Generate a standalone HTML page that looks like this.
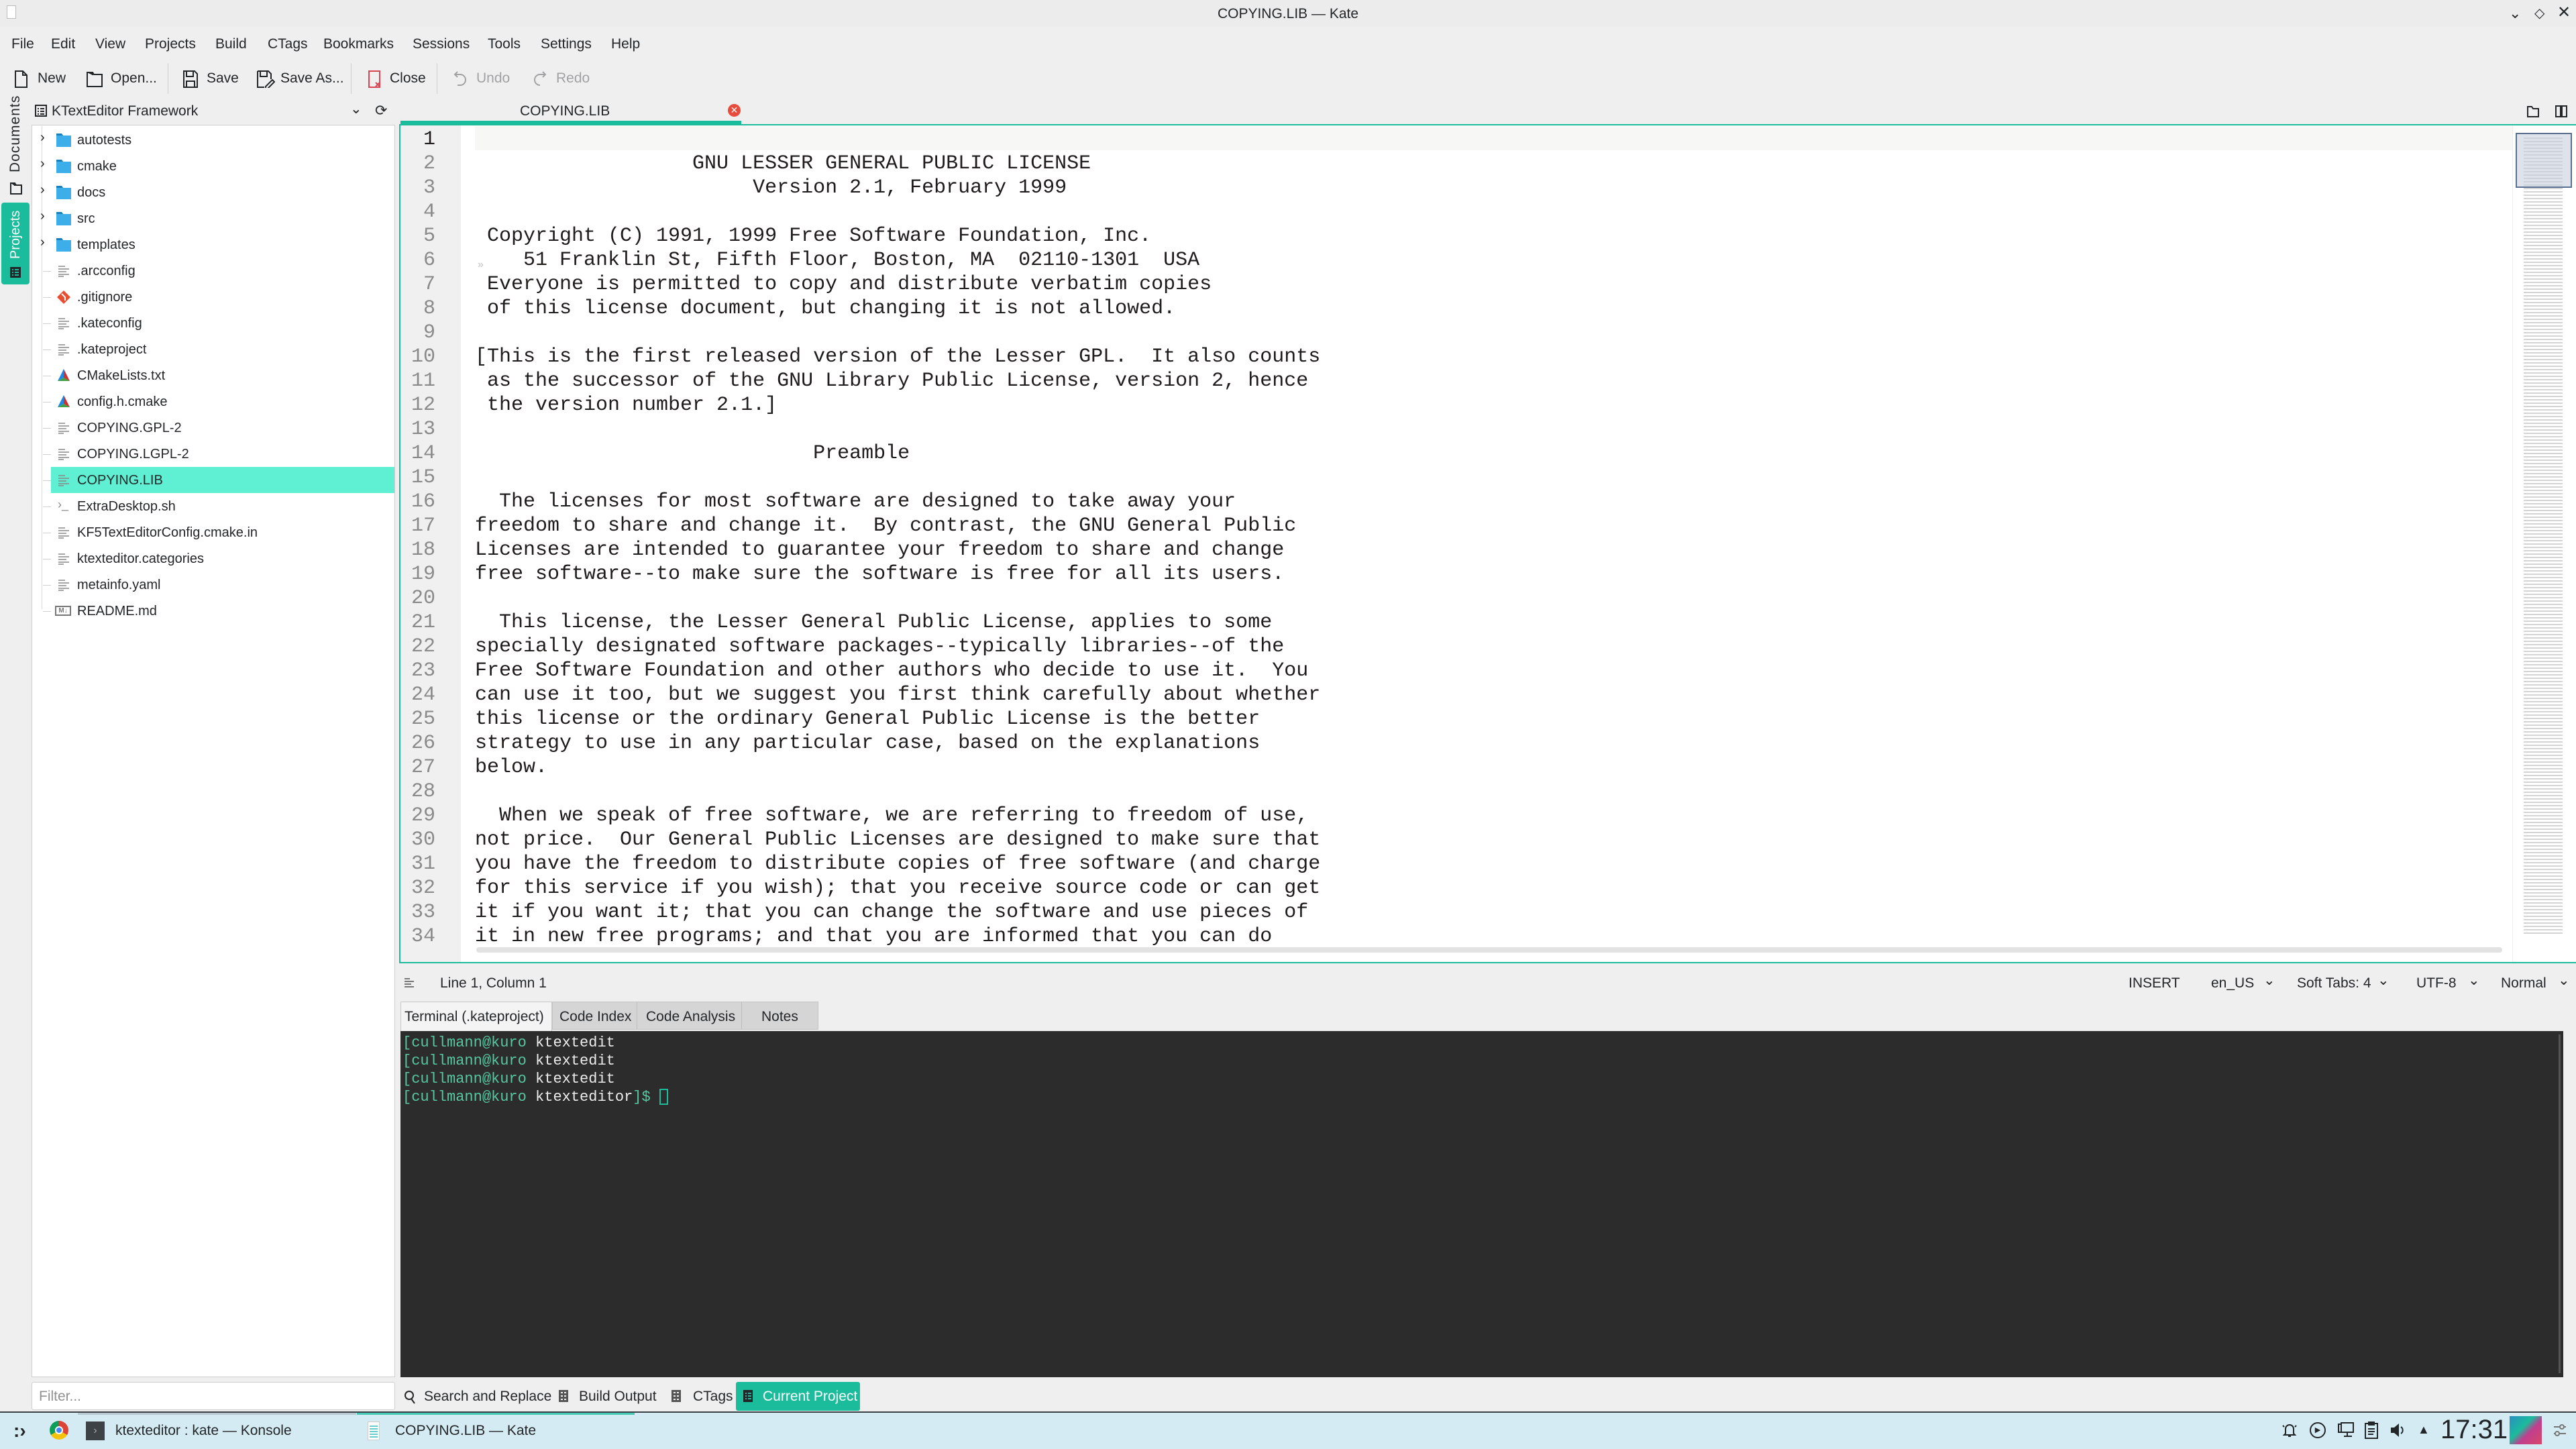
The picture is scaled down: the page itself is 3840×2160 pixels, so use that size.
<!DOCTYPE html>
<html><head><meta charset="utf-8">
<style>
*{margin:0;padding:0;box-sizing:border-box}
body{width:3840px;height:2160px;background:#efefef;position:relative;overflow:hidden;font-family:"Liberation Sans",sans-serif;color:#232629;font-size:21px}
.a{position:absolute;white-space:pre}
.mono{font-family:"Liberation Mono",monospace}
.ui{font-size:21px;line-height:26px}
svg{position:absolute}
</style></head><body>

<!-- title bar -->
<div class="a" style="left:0;top:0;width:3840px;height:40px;background:#ececec"></div>
<div class="a" style="left:10px;top:8px;width:14px;height:20px;border:1px solid #bbb;background:#fff"></div>
<div class="a ui" style="left:0;width:3840px;text-align:center;top:8px">COPYING.LIB — Kate</div>
<div class="a ui" style="left:3740px;top:7px;font-size:22px">⌄</div>
<div class="a ui" style="left:3778px;top:7px;font-size:20px">◇</div>
<div class="a ui" style="left:3812px;top:6px;font-size:24px">✕</div>

<!-- menu -->
<div class="a ui" style="top:53px;left:17px">File</div>
<div class="a ui" style="top:53px;left:76px">Edit</div>
<div class="a ui" style="top:53px;left:142px">View</div>
<div class="a ui" style="top:53px;left:216px">Projects</div>
<div class="a ui" style="top:53px;left:321px">Build</div>
<div class="a ui" style="top:53px;left:399px">CTags</div>
<div class="a ui" style="top:53px;left:482px">Bookmarks</div>
<div class="a ui" style="top:53px;left:615px">Sessions</div>
<div class="a ui" style="top:53px;left:727px">Tools</div>
<div class="a ui" style="top:53px;left:806px">Settings</div>
<div class="a ui" style="top:53px;left:911px">Help</div>

<!-- toolbar -->
<svg style="left:20px;top:105px" width="24" height="26" viewBox="0 0 24 26" fill="none" stroke="#232629" stroke-width="2"><path d="M3 1h11l6 6v18H3z"/><path d="M14 1v6h6"/></svg>
<div class="a ui" style="top:104px;left:56px">New</div>
<svg style="left:128px;top:105px" width="26" height="26" viewBox="0 0 26 26" fill="none" stroke="#232629" stroke-width="2"><path d="M2 3h8l2 3h12v18H2z"/><path d="M2 3h8v4" fill="#232629"/></svg>
<div class="a ui" style="top:104px;left:165px">Open...</div>
<div class="a" style="left:250px;top:94px;width:1px;height:46px;background:#d0d0d0"></div>
<svg style="left:272px;top:105px" width="24" height="26" viewBox="0 0 24 26" fill="none" stroke="#232629" stroke-width="2"><path d="M2 1h16l4 4v20H2z"/><path d="M6 1v8h10V1M6 25v-9h12v9"/></svg>
<div class="a ui" style="top:104px;left:308px">Save</div>
<svg style="left:382px;top:105px" width="28" height="26" viewBox="0 0 28 26" fill="none" stroke="#232629" stroke-width="2"><path d="M2 1h16l4 4v8M2 1v24h10"/><path d="M6 1v8h10V1"/><path d="M14 24l10-10 3 3-10 10h-3z"/></svg>
<div class="a ui" style="top:104px;left:418px">Save As...</div>
<div class="a" style="left:523px;top:94px;width:1px;height:46px;background:#d0d0d0"></div>
<svg style="left:548px;top:105px" width="22" height="28" viewBox="0 0 22 28" fill="none" stroke="#da4453" stroke-width="2"><path d="M2 1h16v24H2z"/><path d="M12 18l6 6M18 18l-6 6"/></svg>
<div class="a ui" style="top:104px;left:581px">Close</div>
<div class="a" style="left:651px;top:94px;width:1px;height:46px;background:#d0d0d0"></div>
<svg style="left:676px;top:105px" width="22" height="26" viewBox="0 0 22 26" fill="none" stroke="#a0a2a4" stroke-width="2"><path d="M6 2L2 6l4 4M2 6h8a8 8 0 0 1 0 16H6"/></svg>
<div class="a ui" style="top:104px;left:710px;color:#a0a2a4">Undo</div>
<svg style="left:793px;top:105px" width="22" height="26" viewBox="0 0 22 26" fill="none" stroke="#a0a2a4" stroke-width="2"><path d="M16 2l4 4-4 4M20 6h-8a8 8 0 0 0 0 16"/></svg>
<div class="a ui" style="top:104px;left:829px;color:#a0a2a4">Redo</div>

<!-- left vertical strip -->
<div class="a ui" style="left:10px;top:257px;transform:rotate(-90deg);transform-origin:0 0;font-size:21px;letter-spacing:1px">Documents</div>
<svg style="left:14px;top:271px" width="20" height="20" viewBox="0 0 20 20" fill="none" stroke="#232629" stroke-width="2"><path d="M2 2h6l2 3h8v13H2z"/><path d="M2 2h6v4" fill="#232629"/></svg>
<div class="a" style="left:2px;top:302px;width:42px;height:122px;background:#1abc9c;border-radius:4px"></div>
<div class="a" style="left:11px;top:386px;transform:rotate(-90deg);transform-origin:0 0;color:#fff;font-size:20px;line-height:24px">Projects</div>
<svg style="left:14px;top:397px" width="18" height="18" viewBox="0 0 18 18"><rect x="1" y="1" width="16" height="16" fill="#232629"/><path d="M4 5h2M8 5h6M4 9h2M8 9h6M4 13h2M8 13h6" stroke="#1abc9c" stroke-width="2"/></svg>

<!-- project header -->
<svg style="left:52px;top:156px" width="18" height="18" viewBox="0 0 18 18"><rect x="1" y="1" width="16" height="16" fill="none" stroke="#232629" stroke-width="2"/><path d="M4 6h2M8 6h6M4 10h2M8 10h6M4 14h2M8 14h6" stroke="#232629" stroke-width="2"/></svg>
<div class="a ui" style="left:77px;top:153px">KTextEditor Framework</div>
<div class="a ui" style="left:522px;top:150px">⌄</div>
<div class="a ui" style="left:559px;top:152px;font-size:22px">⟳</div>

<!-- tree -->
<div class="a" style="left:47px;top:186px;width:542px;height:1867px;background:#fff;border:1px solid #cfcfcf"></div>
<div class="a" style="left:62px;top:188px;width:1px;height:720px;background:#d8d8d8"></div>
<div class="a" style="left:76px;top:696px;width:512px;height:39px;background:#5ff0d3"></div>

<div id="tree"></div>

<!-- filter -->
<div class="a" style="left:47px;top:2060px;width:542px;height:42px;background:#fff;border:1px solid #cfcfcf;border-radius:3px"></div>
<div class="a ui" style="left:58px;top:2069px;color:#909090">Filter...</div>

<!-- editor tab row -->
<div class="a ui" style="left:775px;top:153px">COPYING.LIB</div>
<div class="a" style="left:1085px;top:155px;width:19px;height:19px;border-radius:50%;background:#e74c3c;color:#fff;font-size:14px;line-height:19px;text-align:center">✕</div>
<div class="a" style="left:597px;top:180px;width:508px;height:5px;background:#1abc9c"></div>
<svg style="left:3766px;top:156px" width="20" height="20" viewBox="0 0 20 20" fill="none" stroke="#232629" stroke-width="2"><path d="M2 3h6l2 3h8v12H2z"/></svg>
<svg style="left:3808px;top:156px" width="20" height="20" viewBox="0 0 20 20" fill="none" stroke="#232629" stroke-width="2"><rect x="2" y="2" width="7" height="16"/><rect x="11" y="2" width="7" height="16"/></svg>

<!-- editor -->
<div class="a" style="left:595px;top:185px;width:3245px;height:1251px;background:#fff;border:2px solid #1abc9c;border-right:none"></div>
<div class="a" style="left:597px;top:187px;width:90px;height:1247px;background:#f0f0f0"></div>
<div class="a" style="left:708px;top:188px;width:3037px;height:36px;background:#f7f7f5"></div>
<div class="a" style="left:710px;top:1412px;width:3020px;height:8px;background:#e2e2e2;border-radius:4px"></div>
<div class="a" style="left:3745px;top:187px;width:1px;height:1247px;background:#eee"></div>
<div class="a" style="left:3762px;top:205px;width:58px;height:1190px;background:repeating-linear-gradient(#b0b0b0 0 2px,#fff 2px 5px);opacity:.55"></div>
<div class="a" style="left:3750px;top:198px;width:84px;height:82px;background:rgba(200,208,222,.6);border:2px solid #5a7090"></div>

<div id="gut" class="a mono" style="left:597px;top:190px;width:52px;text-align:right;font-size:30px;line-height:36px;color:#8a8a8a"></div>
<div id="ed" class="a mono" style="left:708px;top:190px;font-size:30px;line-height:36px;color:#1f1c1b;height:1220px;overflow:hidden"></div>
<div class="a" style="left:712px;top:386px;color:#c0c0c0;font-size:16px">»</div>

<!-- status bar -->
<svg style="left:602px;top:1457px" width="16" height="18" viewBox="0 0 16 18" stroke="#777" stroke-width="2"><path d="M1 2h8M1 6h14M1 10h10M1 14h14"/></svg>
<div class="a ui" style="left:656px;top:1453px">Line 1, Column 1</div>
<div class="a ui" style="left:3173px;top:1453px">INSERT</div>
<div class="a ui" style="left:3296px;top:1453px">en_US</div>
<div class="a ui" style="left:3374px;top:1449px">⌄</div>
<div class="a ui" style="left:3424px;top:1453px">Soft Tabs: 4</div>
<div class="a ui" style="left:3544px;top:1449px">⌄</div>
<div class="a ui" style="left:3602px;top:1453px">UTF-8</div>
<div class="a ui" style="left:3679px;top:1449px">⌄</div>
<div class="a ui" style="left:3728px;top:1453px">Normal</div>
<div class="a ui" style="left:3813px;top:1449px">⌄</div>

<!-- bottom tabs -->
<div class="a" style="left:597px;top:1493px;width:226px;height:44px;background:#f4f4f4;border:1px solid #c8c8c8;border-bottom:none"></div>
<div class="a" style="left:823px;top:1493px;width:397px;height:42px;background:#d5d5d5;border:1px solid #c4c4c4"></div>
<div class="a" style="left:949px;top:1493px;width:1px;height:42px;background:#bdbdbd"></div>
<div class="a" style="left:1105px;top:1493px;width:1px;height:42px;background:#bdbdbd"></div>
<div class="a ui" style="left:603px;top:1503px">Terminal (.kateproject)</div>
<div class="a ui" style="left:834px;top:1503px">Code Index</div>
<div class="a ui" style="left:963px;top:1503px">Code Analysis</div>
<div class="a ui" style="left:1135px;top:1503px">Notes</div>

<!-- terminal -->
<div class="a" style="left:597px;top:1537px;width:3224px;height:516px;background:#2c2c2c"></div>
<div class="a" style="left:3814px;top:1542px;width:3px;height:505px;background:#555"></div>
<div class="a mono" style="left:600px;top:1541px;font-size:22px;line-height:27px;color:#ececec"><span style="color:#57c7a0">[cullmann@kuro</span> ktextedit
<span style="color:#57c7a0">[cullmann@kuro</span> ktextedit
<span style="color:#57c7a0">[cullmann@kuro</span> ktextedit
<span style="color:#57c7a0">[cullmann@kuro</span> ktexteditor<span style="color:#57c7a0">]$</span> <span style="display:inline-block;width:13px;height:24px;border:2px solid #1abc9c;vertical-align:middle"></span></div>

<!-- bottom toolview buttons -->
<svg style="left:601px;top:2072px" width="20" height="22" viewBox="0 0 20 22" fill="none" stroke="#232629" stroke-width="2"><circle cx="9" cy="8" r="6"/><path d="M12 13l5 7"/></svg>
<div class="a ui" style="left:632px;top:2069px">Search and Replace</div>
<svg style="left:832px;top:2071px" width="16" height="20" viewBox="0 0 16 20"><rect x="1" y="1" width="14" height="18" fill="#555"/><path d="M4 5h3M9 5h3M4 10h3M9 10h3M4 15h3M9 15h3" stroke="#eee" stroke-width="2"/></svg>
<div class="a ui" style="left:863px;top:2069px">Build Output</div>
<svg style="left:1000px;top:2071px" width="16" height="20" viewBox="0 0 16 20"><rect x="1" y="1" width="14" height="18" fill="#555"/><path d="M4 5h3M9 5h3M4 10h3M9 10h3M4 15h3M9 15h3" stroke="#eee" stroke-width="2"/></svg>
<div class="a ui" style="left:1033px;top:2069px">CTags</div>
<div class="a" style="left:1097px;top:2060px;width:185px;height:43px;background:#1abc9c;border-radius:3px"></div>
<svg style="left:1107px;top:2071px" width="16" height="20" viewBox="0 0 16 20"><rect x="1" y="1" width="14" height="18" fill="#232629"/><path d="M4 6h2M8 6h5M4 10h2M8 10h5M4 14h2M8 14h5" stroke="#1abc9c" stroke-width="2"/></svg>
<div class="a ui" style="left:1137px;top:2069px;color:#fff">Current Project</div>

<!-- taskbar -->
<div class="a" style="left:0;top:2104px;width:3840px;height:56px;background:#d5ebf3;border-top:2px solid #3a4045"></div>
<div class="a" style="left:116px;top:2106px;width:415px;height:3px;background:#b8c8d0"></div>
<div class="a" style="left:532px;top:2106px;width:414px;height:3px;background:#46c8b4"></div>
<div class="a" style="left:20px;top:2117px;font-size:28px;font-weight:bold;color:#232629">:›</div>
<div class="a" style="left:74px;top:2118px;width:28px;height:28px;border-radius:50%;background:conic-gradient(#db4437 0 120deg,#f4c20d 120deg 240deg,#0f9d58 240deg)"></div>
<div class="a" style="left:82px;top:2126px;width:12px;height:12px;border-radius:50%;background:#4285f4;border:2px solid #fff"></div>
<div class="a" style="left:128px;top:2119px;width:28px;height:28px;background:#3c4246;color:#aaa;font-size:16px;text-align:center;line-height:28px">›</div>
<div class="a ui" style="left:172px;top:2120px">ktexteditor : kate — Konsole</div>
<div class="a" style="left:548px;top:2119px;width:18px;height:28px;background:#fff;border:1px solid #ccc"></div>
<div class="a" style="left:551px;top:2125px;width:12px;height:18px;background:repeating-linear-gradient(#6cc 0 2px,#fff 2px 4px)"></div>
<div class="a ui" style="left:589px;top:2120px">COPYING.LIB — Kate</div>
<svg style="left:3400px;top:2119px" width="26" height="26" viewBox="0 0 26 26" fill="none" stroke="#232629" stroke-width="2"><path d="M7 18V11a6 6 0 0 1 12 0v7l2 2H5z"/><path d="M11 22h4M3 6l2 2M23 6l-2 2"/></svg>
<div class="a" style="left:3443px;top:2120px;width:24px;height:24px;border:2px solid #232629;border-radius:50%;font-size:11px;text-align:center;line-height:20px">▶</div>
<svg style="left:3484px;top:2119px" width="26" height="26" viewBox="0 0 26 26" fill="none" stroke="#232629" stroke-width="2"><rect x="6" y="2" width="18" height="14"/><path d="M10 22h12M15 16v6M2 4h4v12H2z"/></svg>
<svg style="left:3524px;top:2118px" width="22" height="28" viewBox="0 0 22 28" fill="none" stroke="#232629" stroke-width="2"><rect x="2" y="4" width="18" height="22"/><path d="M7 2h8v4H7zM6 12h10M6 16h10M6 20h8"/></svg>
<svg style="left:3562px;top:2120px" width="26" height="24" viewBox="0 0 26 24"><path d="M2 8h5l7-6v20l-7-6H2z" fill="#232629"/><path d="M17 7a6 6 0 0 1 0 10" stroke="#232629" stroke-width="2" fill="none"/></svg>
<div class="a" style="left:3604px;top:2121px;font-size:18px">▲</div>
<div class="a" style="left:3638px;top:2109px;font-size:40px;color:#232629">17:31</div>
<div class="a" style="left:3741px;top:2111px;width:48px;height:42px;background:linear-gradient(135deg,#2a8fc0 0,#1abc9c 40%,#c03e8e 60%,#d84868 100%)"></div>
<svg style="left:3806px;top:2121px" width="20" height="22" viewBox="0 0 20 22" stroke="#777" stroke-width="2" fill="#d5ebf3"><path d="M1 6h18M1 16h18"/><circle cx="13" cy="6" r="3"/><circle cx="6" cy="16" r="3"/></svg>

<script>
var items=[["autotests","f"],["cmake","f"],["docs","f"],["src","f"],["templates","f"],[".arcconfig","t"],[".gitignore","g"],[".kateconfig","t"],[".kateproject","t"],["CMakeLists.txt","c"],["config.h.cmake","c"],["COPYING.GPL-2","t"],["COPYING.LGPL-2","t"],["COPYING.LIB","t"],["ExtraDesktop.sh","s"],["KF5TextEditorConfig.cmake.in","t"],["ktexteditor.categories","t"],["metainfo.yaml","t"],["README.md","m"]];
var h="";
items.forEach(function(it,i){var cy=209+39*i,t=cy-13;
if(it[1]=="f"){h+='<div class="a" style="left:60px;top:'+(cy-15)+'px;font-size:20px;color:#232629">›</div>';
h+='<svg style="left:84px;top:'+(cy-10)+'px" width="22" height="20" viewBox="0 0 22 20"><path d="M0 0h8l2 3h12v17H0z" fill="#3daee9"/><path d="M0 0h8l2 3H0z" fill="#1d7fb8"/></svg>';}
else{h+='<div class="a" style="left:64px;top:'+cy+'px;width:12px;height:1px;background:#d0d0d0"></div>';
if(it[1]=="t")h+='<svg style="left:86px;top:'+(cy-9)+'px" width="18" height="18" viewBox="0 0 18 18" stroke="#888" stroke-width="1.5"><path d="M1 2h10M1 6h16M1 10h12M1 14h16M1 17h8"/></svg>';
if(it[1]=="g")h+='<svg style="left:84px;top:'+(cy-11)+'px" width="22" height="22" viewBox="0 0 22 22"><path d="M11 1l10 10-10 10L1 11z" fill="#e84e31"/><path d="M8 6l5 5v5M13 11" stroke="#fff" stroke-width="2" fill="none"/></svg>';
if(it[1]=="c")h+='<svg style="left:86px;top:'+(cy-10)+'px" width="18" height="20" viewBox="0 0 18 20"><path d="M9 0L0 18l9-5z" fill="#1e88e5"/><path d="M9 0l9 18-9-5z" fill="#d32f2f"/><path d="M0 18l9-5 9 5z" fill="#43a047"/></svg>';
if(it[1]=="s")h+='<div class="a" style="left:86px;top:'+(cy-13)+'px;font-size:18px;color:#888">›_</div>';
if(it[1]=="m")h+='<div class="a" style="left:82px;top:'+(cy-8)+'px;width:24px;height:15px;border:2px solid #777;font-size:10px;font-weight:bold;color:#777;line-height:11px;text-align:center">M↓</div>';}
h+='<div class="a" style="left:115px;top:'+t+'px;font-size:20px;line-height:26px">'+it[0]+'</div>';});
document.getElementById("tree").innerHTML=h;
var L=["","                  GNU LESSER GENERAL PUBLIC LICENSE","                       Version 2.1, February 1999",""," Copyright (C) 1991, 1999 Free Software Foundation, Inc.","    51 Franklin St, Fifth Floor, Boston, MA  02110-1301  USA"," Everyone is permitted to copy and distribute verbatim copies"," of this license document, but changing it is not allowed.","","[This is the first released version of the Lesser GPL.  It also counts"," as the successor of the GNU Library Public License, version 2, hence"," the version number 2.1.]","","                            Preamble","","  The licenses for most software are designed to take away your","freedom to share and change it.  By contrast, the GNU General Public","Licenses are intended to guarantee your freedom to share and change","free software--to make sure the software is free for all its users.","","  This license, the Lesser General Public License, applies to some","specially designated software packages--typically libraries--of the","Free Software Foundation and other authors who decide to use it.  You","can use it too, but we suggest you first think carefully about whether","this license or the ordinary General Public License is the better","strategy to use in any particular case, based on the explanations","below.","","  When we speak of free software, we are referring to freedom of use,","not price.  Our General Public Licenses are designed to make sure that","you have the freedom to distribute copies of free software (and charge","for this service if you wish); that you receive source code or can get","it if you want it; that you can change the software and use pieces of","it in new free programs; and that you are informed that you can do"];
var e=document.getElementById("ed");e.textContent=L.join("\n");
var g="";for(var i=1;i<=34;i++)g+=(i==1?'<span style="color:#1f1c1b">1</span>':i)+"\n";
document.getElementById("gut").innerHTML=g;
</script>
</body></html>
